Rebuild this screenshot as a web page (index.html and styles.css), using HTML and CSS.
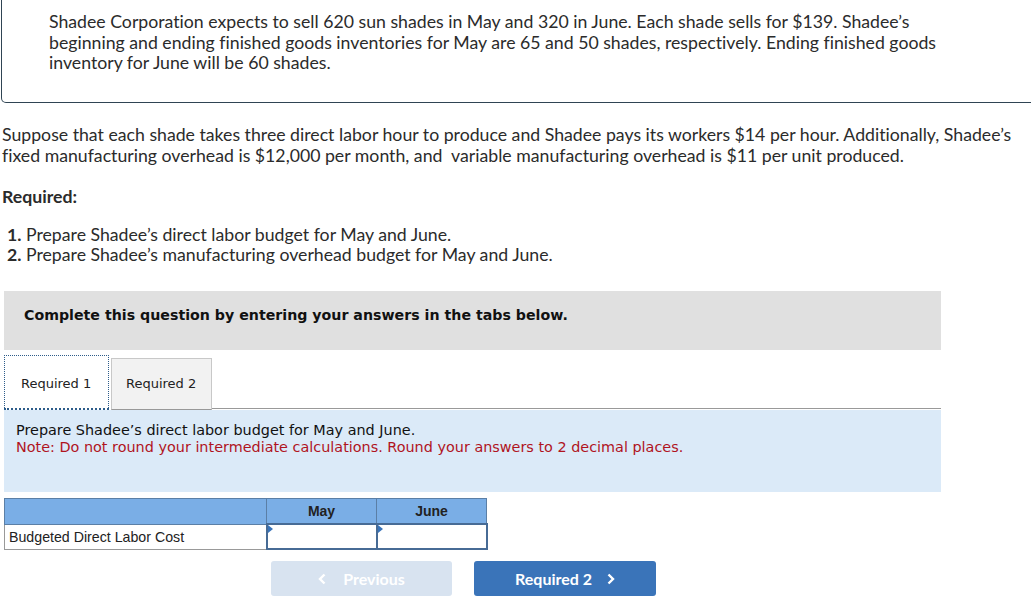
FILE: index.html
```html
<!DOCTYPE html>
<html>
<head>
<meta charset="utf-8">
<link rel="stylesheet" href="styles.css">
</head>
<body>
<div class="intro">
  <p>Shadee Corporation expects to sell 620 sun shades in May and 320 in June. Each shade sells for $139. Shadee’s beginning and ending finished goods inventories for May are 65 and 50 shades, respectively. Ending finished goods inventory for June will be 60 shades.</p>
</div>
<p class="para">Suppose that each shade takes three direct labor hour to produce and Shadee pays its workers $14 per hour. Additionally, Shadee’s fixed manufacturing overhead is $12,000 per month, and &nbsp;variable manufacturing overhead is $11 per unit produced.</p>
<p class="required">Required:</p>
<ol class="reqlist">
  <li><b>1.</b> Prepare Shadee’s direct labor budget for May and June.</li>
  <li><b>2.</b> Prepare Shadee’s manufacturing overhead budget for May and June.</li>
</ol>
<div class="work">
  <div class="banner">Complete this question by entering your answers in the tabs below.</div>
  <div class="tabs">
    <div class="tab active">Required 1</div>
    <div class="tab other">Required 2</div>
    <div class="tabline"></div>
  </div>
  <div class="panel">
    <div>Prepare Shadee’s direct labor budget for May and June.</div>
    <div class="note">Note: Do not round your intermediate calculations. Round your answers to 2 decimal places.</div>
  </div>
  <table class="grid">
    <tr class="head"><th class="c1"></th><th class="c2">May</th><th class="c3">June</th></tr>
    <tr><td class="label">Budgeted Direct Labor Cost</td><td class="input"><span class="tri"></span></td><td class="input"><span class="tri"></span></td></tr>
  </table>
  <div class="nav">
    <div class="btn prev"><svg class="chev left" width="8" height="12" viewBox="0 0 8 12"><polyline points="6.5,1.5 2,6 6.5,10.5" fill="none" stroke="#fff" stroke-width="2.4"/></svg>Previous</div>
    <div class="btn next">Required 2<svg class="chev right" width="8" height="12" viewBox="0 0 8 12"><polyline points="1.5,1.5 6,6 1.5,10.5" fill="none" stroke="#fff" stroke-width="2.4"/></svg></div>
  </div>
</div>
</body>
</html>
```

FILE: styles.css
```css
html, body { margin: 0; padding: 0; background: #fff; }
body { font-family: "Lato", "Open Sans", sans-serif; color: #2b2b2b; font-size: 17.7px; overflow: hidden; font-variant-ligatures: none; }
p { margin: 0; }
.intro {
  margin: -2px -20px 0 1px;
  border: 1px solid #2f4453;
  border-top: none;
  border-radius: 0 0 0 5px;
  padding: 14px 20px 28px 47px;
  height: 62px;
}
.intro p { line-height: 20.5px; width: 920px; }
.para { margin: 21px 0 0 2px; line-height: 21px; width: 1029px; }
.required { margin: 20px 0 0 2px; font-weight: bold; line-height: 21px; }
.reqlist { list-style: none; margin: 18px 0 0 7px; padding: 0; line-height: 20px; }
.reqlist b { font-weight: bold; }
.work { margin: 26px 0 0 4px; width: 937px; font-family: "DejaVu Sans", Verdana, sans-serif; }
.banner { background: #e0e0e0; height: 59px; line-height: 49px; padding-left: 20px; font-size: 14.2px; font-weight: bold; color: #111; }
.tabs { display: flex; align-items: flex-end; margin-top: 5px; height: 55px; }
.tab { font-size: 13px; color: #222; box-sizing: border-box; }
.tab.active { width: 105px; height: 55px; padding: 4px 0 0 16px; line-height: 48px; border: 1px dotted #2d5c8a; border-bottom: 2px dotted #2d5c8a; background: #fff; }
.tab.other { width: 101px; height: 52px; margin-left: 2px; padding-left: 14px; line-height: 50px; background: #f2f2f2; border: 1px solid #c8c8c8; border-bottom: 1px solid #999; }
.tabline { flex: 1; height: 1px; background: #999; margin-bottom: 1px; }
.panel { background: #dbeaf8; height: 70px; padding: 12px 12px 0 12px; font-size: 14.4px; line-height: 17px; color: #111; }
.note { color: #b0141e; }
.grid { border-collapse: collapse; margin-top: 6px; font-family: "Liberation Sans", Arial, sans-serif; font-size: 14.2px; }
.grid th { background: #7aaee6; border: 1px solid #5b7fa6; height: 24px; font-size: 14px; font-weight: bold; color: #222; padding: 0; }
.grid .c1 { width: 261px; }
.grid .c2 { width: 109px; }
.grid .c3 { width: 109px; }
.grid td { height: 23px; padding: 0; }
.grid .label { border: 1px solid #999; padding-left: 4px; color: #222; }
.grid .input { border: 2px solid #476b95; position: relative; background: #fff; }
.tri { position: absolute; left: 0; top: 0; width: 0; height: 0; border-left: 5px solid #3a74b9; border-top: 4px solid transparent; border-bottom: 4px solid transparent; }
.nav { display: flex; gap: 22px; margin: 11px 0 0 267px; font-family: "Lato", sans-serif; }
.btn { width: 181px; height: 35px; border-radius: 3px; display: flex; align-items: center; justify-content: center; color: #fff; font-weight: bold; font-size: 16px; }
.btn.prev { background: #d8e3f0; }
.btn.next { background: #3a74b9; width: 182px; }
.chev.left { margin-right: 17px; }
.chev.right { margin-left: 15px; }
```
